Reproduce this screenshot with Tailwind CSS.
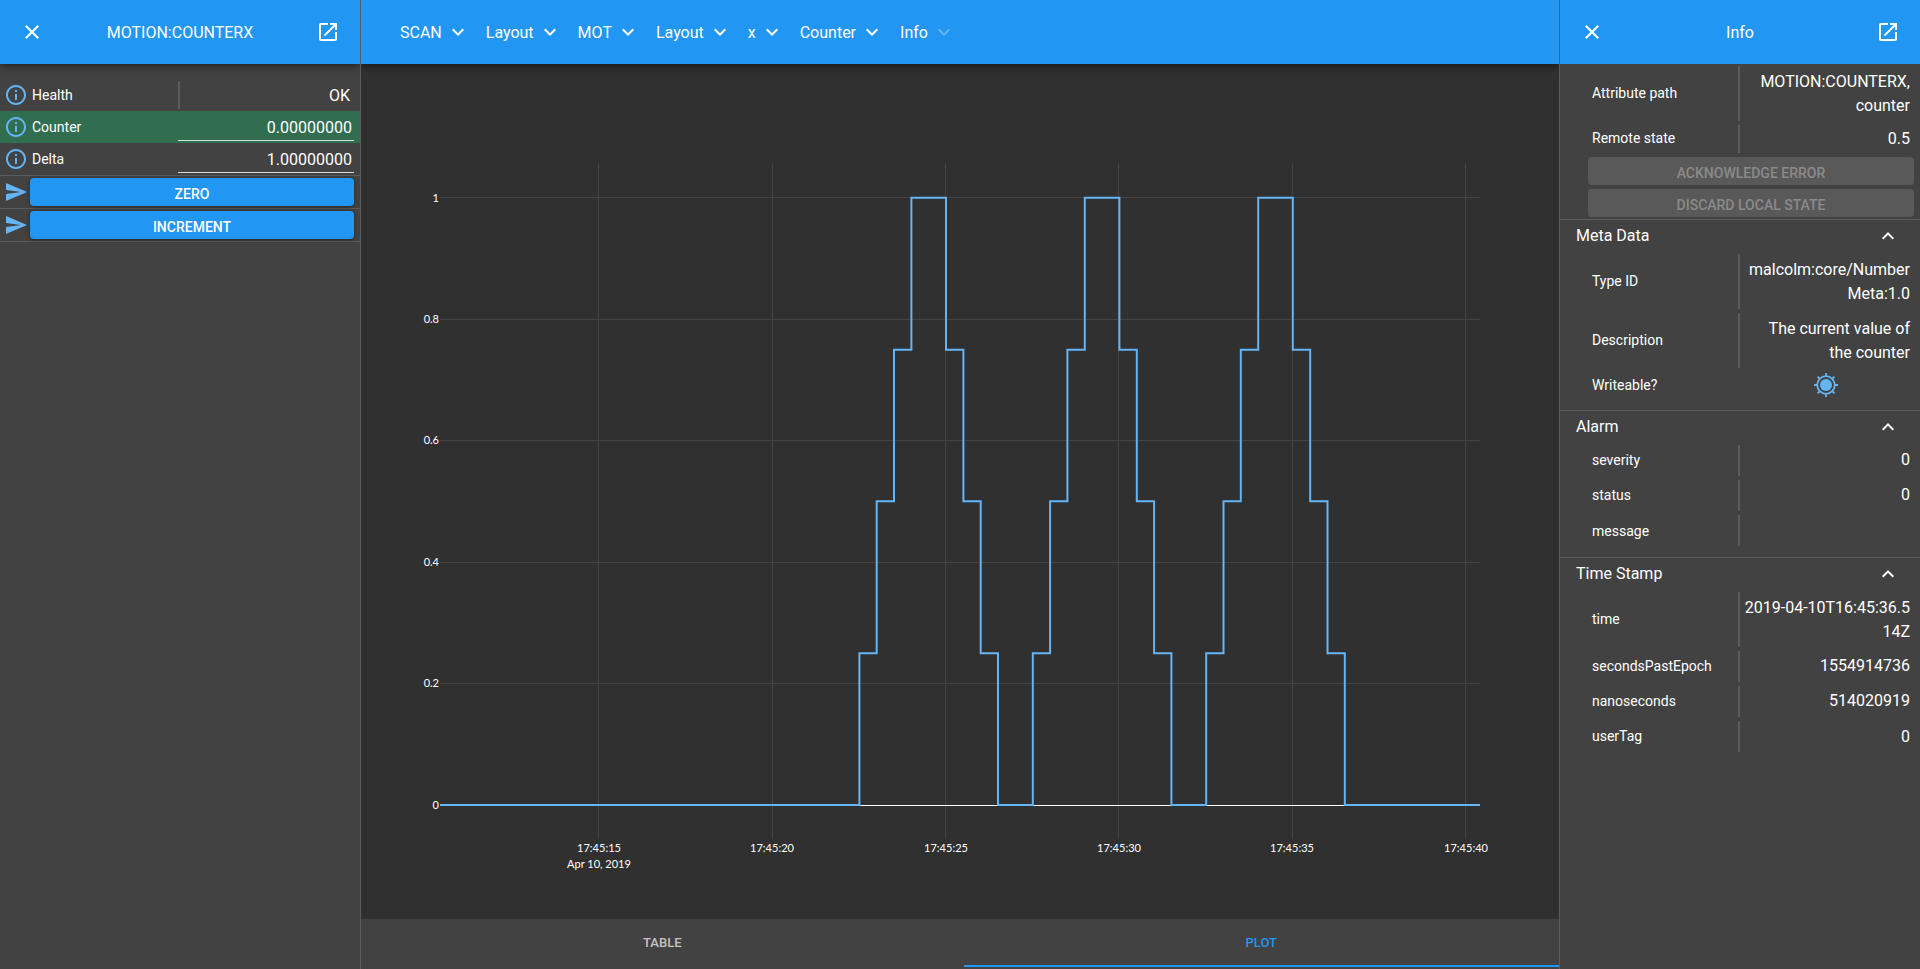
<!DOCTYPE html>
<html lang="en">
<head>
<meta charset="utf-8">
<title>MOTION:COUNTERX</title>
<script src="https://cdn.jsdelivr.net/npm/@tailwindcss/browser@4"></script>
</head>
<body class="bg-[#303030] text-white font-[Roboto,sans-serif] text-base">
<svg class="hidden" aria-hidden="true">
  <symbol id="close" viewBox="0 0 24 24"><path d="M19 6.41L17.59 5 12 10.59 6.41 5 5 6.41 10.59 12 5 17.59 6.41 19 12 13.41 17.59 19 19 17.59 13.41 12z"/></symbol>
  <symbol id="open" viewBox="0 0 24 24"><path d="M19 19H5V5h7V3H5c-1.11 0-2 .9-2 2v14c0 1.1.89 2 2 2h14c1.1 0 2-.9 2-2v-7h-2v7zM14 3v2h3.59l-9.83 9.83 1.41 1.41L19 6.41V10h2V3h-7z"/></symbol>
  <symbol id="info" viewBox="0 0 24 24"><path d="M11 17h2v-6h-2v6zm1-15C6.48 2 2 6.48 2 12s4.48 10 10 10 10-4.48 10-10S17.52 2 12 2zm0 18c-4.41 0-8-3.59-8-8s3.59-8 8-8 8 3.59 8 8-3.59 8-8 8zM11 9h2V7h-2v2z"/></symbol>
  <symbol id="send" viewBox="0 0 24 24"><path d="M2.01 21L23 12 2.01 3 2 10l15 2-15 2z"/></symbol>
  <symbol id="down" viewBox="0 0 24 24"><path d="M7.41 8.59L12 13.17l4.59-4.58L18 10l-6 6-6-6z"/></symbol>
  <symbol id="up" viewBox="0 0 24 24"><path d="M12 8l-6 6 1.41 1.41L12 10.83l4.59 4.58L18 14z"/></symbol>
  <symbol id="led" viewBox="0 0 24 24"><circle cx="12" cy="12" r="6"/><circle cx="12" cy="12" r="8.8" fill="none" stroke="currentColor" stroke-width="1.8"/><path fill="none" stroke="currentColor" stroke-width="1.8" d="M12 0v3M12 21v3M0 12h3M21 12h3M3.6 3.6l2 2M18.4 18.4l2 2M3.6 20.4l2-2M18.4 5.6l2-2"/></symbol>
</svg>
<div class="grid h-screen grid-cols-[361px_minmax(0,1fr)_361px] grid-rows-[minmax(0,1fr)]">

  <aside class="overflow-hidden border-r border-[#5c5c5c] bg-[#424242]">
    <header class="flex h-16 items-center justify-between bg-[#2196f3] px-5 shadow-[0_2px_8px_rgba(0,0,0,0.5)]">
      <button aria-label="Close" class="size-6"><svg class="size-6 fill-current"><use href="#close"/></svg></button>
      <h1 class="pt-0.5">MOTION:COUNTERX</h1>
      <button aria-label="Open in new window" class="size-6"><svg class="size-6 fill-current"><use href="#open"/></svg></button>
    </header>
    <div class="pt-[15px]">
      <div class="flex h-8 items-center pl-1 pr-1.5">
        <button aria-label="Health info" class="text-[#64b5f6]"><svg class="size-6 fill-current"><use href="#info"/></svg></button>
        <span class="flex-1 pl-1 text-sm">Health</span>
        <span class="flex h-7 w-44 items-center justify-end border-l-2 border-[#5c5c5c] pr-1 pt-0.5">OK</span>
      </div>
      <div class="flex h-8 items-center bg-[#316e50] pl-1 pr-1.5">
        <button aria-label="Counter info" class="text-[#64b5f6]"><svg class="size-6 fill-current"><use href="#info"/></svg></button>
        <label for="counter" class="flex-1 pl-1 text-sm">Counter</label>
        <input id="counter" value="0.00000000" class="h-[27px] w-44 border-b border-white/80 pr-0.5 pt-0.5 text-right outline-none">
      </div>
      <div class="flex h-8 items-center pl-1 pr-1.5">
        <button aria-label="Delta info" class="text-[#64b5f6]"><svg class="size-6 fill-current"><use href="#info"/></svg></button>
        <label for="delta" class="flex-1 pl-1 text-sm">Delta</label>
        <input id="delta" value="1.00000000" class="h-[27px] w-44 border-b border-white/80 pr-0.5 pt-0.5 text-right outline-none">
      </div>
      <div class="flex h-[33px] items-center gap-0.5 border-t border-[#5c5c5c] pl-1 pr-1.5">
        <svg class="size-6 fill-[#64b5f6]"><use href="#send"/></svg>
        <button class="h-7 flex-1 rounded bg-[#2196f3] pt-1 text-sm font-medium shadow-[0_1px_4px_rgba(0,0,0,0.4)]">ZERO</button>
      </div>
      <div class="flex h-[34px] items-center gap-0.5 border-y border-[#5c5c5c] pl-1 pr-1.5">
        <svg class="size-6 fill-[#64b5f6]"><use href="#send"/></svg>
        <button class="h-7 flex-1 rounded bg-[#2196f3] pt-1 text-sm font-medium shadow-[0_1px_4px_rgba(0,0,0,0.4)]">INCREMENT</button>
      </div>
    </div>
  </aside>

  <main class="flex flex-col overflow-hidden">
    <nav class="flex h-16 shrink-0 items-center gap-4 bg-[#2196f3] pl-[39px] shadow-[0_2px_8px_rgba(0,0,0,0.5)]">
      <button class="flex items-center gap-1"><span class="pt-0.5">SCAN</span><svg class="size-6 fill-current"><use href="#down"/></svg></button>
      <button class="flex items-center gap-1"><span class="pt-0.5">Layout</span><svg class="size-6 fill-current"><use href="#down"/></svg></button>
      <button class="flex items-center gap-1"><span class="pt-0.5">MOT</span><svg class="size-6 fill-current"><use href="#down"/></svg></button>
      <button class="flex items-center gap-1"><span class="pt-0.5">Layout</span><svg class="size-6 fill-current"><use href="#down"/></svg></button>
      <button class="flex items-center gap-1"><span class="pt-0.5">x</span><svg class="size-6 fill-current"><use href="#down"/></svg></button>
      <button class="flex items-center gap-1"><span class="pt-0.5">Counter</span><svg class="size-6 fill-current"><use href="#down"/></svg></button>
      <button class="flex items-center gap-1" disabled><span class="pt-0.5">Info</span><svg class="size-6 fill-white/30"><use href="#down"/></svg></button>
    </nav>
    <div class="min-h-0 flex-1">
      <svg viewBox="0 0 1198 855" class="block size-full" role="img" aria-label="Counter value over time">
        <path fill="none" stroke="#444" d="M237.5 100V775M411.5 100V775M584.5 100V775M757.5 100V775M931.5 100V775M1104.5 100V775M79 133.5H1119M79 255.5H1119M79 376.5H1119M79 498.5H1119M79 619.5H1119"/>
        <path stroke="#fff" d="M79 741.5H1119"/>
        <path fill="none" stroke="#64b5f6" stroke-width="2" d="M79 741H498.4V589.3H515.7V437.3H533V285.7H550.4V133.7H585V285.7H602.4V437.3H619.7V589.3H637V741H671.8V589.3H689.1V437.3H706.4V285.7H723.8V133.7H758.4V285.7H775.8V437.3H793.1V589.3H810.4V741H845.2V589.3H862.5V437.3H879.8V285.7H897.2V133.7H931.8V285.7H949.2V437.3H966.5V589.3H983.8V741H1119"/>
        <g class="fill-white font-[Lato,sans-serif] text-[11px]">
          <g text-anchor="end">
            <text x="78" y="138">1</text><text x="78" y="259">0.8</text><text x="78" y="380">0.6</text><text x="78" y="502">0.4</text><text x="78" y="623">0.2</text><text x="78" y="745">0</text>
          </g>
          <g text-anchor="middle">
            <text x="238" y="788">17:45:15</text><text x="238" y="804">Apr 10, 2019</text><text x="411" y="788">17:45:20</text><text x="585" y="788">17:45:25</text><text x="758" y="788">17:45:30</text><text x="931" y="788">17:45:35</text><text x="1105" y="788">17:45:40</text>
          </g>
        </g>
      </svg>
    </div>
    <div role="tablist" class="flex h-[50px] shrink-0 bg-[#424242] pb-0.5 text-[13px] font-medium">
      <button role="tab" aria-selected="false" class="flex-auto px-6 text-white/70">TABLE</button>
      <button role="tab" aria-selected="true" class="flex-auto border-b-2 border-[#2196f3] px-6 pt-0.5 text-[#2196f3]">PLOT</button>
    </div>
  </main>

  <aside class="overflow-hidden border-l border-[#5c5c5c] bg-[#424242]">
    <header class="flex h-16 items-center justify-between bg-[#2196f3] px-5">
      <button aria-label="Close info" class="size-6"><svg class="size-6 fill-current"><use href="#close"/></svg></button>
      <h2 class="pt-0.5">Info</h2>
      <button aria-label="Open info in new window" class="size-6"><svg class="size-6 fill-current"><use href="#open"/></svg></button>
    </header>
    <dl>
      <div class="flex h-[59px] items-center pl-8 pr-1.5"><dt class="flex-1 pb-0.5 text-sm">Attribute path</dt><dd class="flex h-[55px] w-44 items-center justify-end border-l-2 border-[#5c5c5c] pr-1 text-right"><span>MOTION:COUNTERX,<br>counter</span></dd></div>
      <div class="flex h-8 items-center pl-8 pr-1.5"><dt class="flex-1 pb-0.5 text-sm">Remote state</dt><dd class="flex h-7 w-44 items-center justify-end border-l-2 border-[#5c5c5c] pr-1">0.5</dd></div>
    </dl>
    <div class="flex flex-col gap-1 py-0.5 pl-7 pr-1.5">
      <button disabled class="h-7 rounded bg-[#595959] pt-1 text-sm font-medium text-[#8a8a8a]">ACKNOWLEDGE ERROR</button>
      <button disabled class="h-7 rounded bg-[#595959] pt-1 text-sm font-medium text-[#8a8a8a]">DISCARD LOCAL STATE</button>
    </div>
    <section class="border-t border-[#5c5c5c] pb-2">
      <button class="flex h-8 w-full items-center justify-between pl-4 pr-5">Meta Data<svg class="size-6 fill-current"><use href="#up"/></svg></button>
      <dl>
        <div class="flex h-[59px] items-center pl-8 pr-1.5"><dt class="flex-1 pb-0.5 text-sm">Type ID</dt><dd class="flex h-[55px] w-44 items-center justify-end border-l-2 border-[#5c5c5c] pr-1 text-right"><span>malcolm:core/Number<br>Meta:1.0</span></dd></div>
        <div class="flex h-[59px] items-center pl-8 pr-1.5"><dt class="flex-1 pb-0.5 text-sm">Description</dt><dd class="flex h-[55px] w-44 items-center justify-end border-l-2 border-[#5c5c5c] pr-1 text-right"><span>The current value of<br>the counter</span></dd></div>
        <div class="flex h-8 items-center pl-8 pr-1.5"><dt class="flex-1 pb-0.5 text-sm">Writeable?</dt><dd class="flex w-44 justify-center pb-0.5 text-[#64b5f6]"><svg class="size-6 fill-current" role="img" aria-label="Yes"><use href="#led"/></svg></dd></div>
      </dl>
    </section>
    <section class="border-t border-[#5c5c5c] pb-[9px]">
      <button class="flex h-8 w-full items-center justify-between pl-4 pr-5">Alarm<svg class="size-6 fill-current"><use href="#up"/></svg></button>
      <dl>
        <div class="flex h-[35px] items-center pl-8 pr-1.5"><dt class="flex-1 pb-0.5 text-sm">severity</dt><dd class="flex h-[31px] w-44 items-center justify-end border-l-2 border-[#5c5c5c] pb-0.5 pr-1">0</dd></div>
        <div class="flex h-[35px] items-center pl-8 pr-1.5"><dt class="flex-1 pb-0.5 text-sm">status</dt><dd class="flex h-[31px] w-44 items-center justify-end border-l-2 border-[#5c5c5c] pb-0.5 pr-1">0</dd></div>
        <div class="flex h-[35px] items-center pl-8 pr-1.5"><dt class="flex-1 text-sm">message</dt><dd class="h-[31px] w-44 border-l-2 border-[#5c5c5c]"></dd></div>
      </dl>
    </section>
    <section class="border-t border-[#5c5c5c]">
      <button class="flex h-8 w-full items-center justify-between pl-4 pr-5">Time Stamp<svg class="size-6 fill-current"><use href="#up"/></svg></button>
      <dl>
        <div class="flex h-[59px] items-center pl-8 pr-1.5"><dt class="flex-1 pb-0.5 text-sm">time</dt><dd class="flex h-[55px] w-44 items-center justify-end border-l-2 border-[#5c5c5c] pr-1 text-right"><span>2019-04-10T16:45:36.5<br>14Z</span></dd></div>
        <div class="flex h-[35px] items-center pl-8 pr-1.5"><dt class="flex-1 pb-0.5 text-sm">secondsPastEpoch</dt><dd class="flex h-[31px] w-44 items-center justify-end border-l-2 border-[#5c5c5c] pb-0.5 pr-1">1554914736</dd></div>
        <div class="flex h-[35px] items-center pl-8 pr-1.5"><dt class="flex-1 pb-0.5 text-sm">nanoseconds</dt><dd class="flex h-[31px] w-44 items-center justify-end border-l-2 border-[#5c5c5c] pb-0.5 pr-1">514020919</dd></div>
        <div class="flex h-[35px] items-center pl-8 pr-1.5"><dt class="flex-1 pb-0.5 text-sm">userTag</dt><dd class="flex h-[31px] w-44 items-center justify-end border-l-2 border-[#5c5c5c] pr-1">0</dd></div>
      </dl>
    </section>
  </aside>
</div>
</body>
</html>
